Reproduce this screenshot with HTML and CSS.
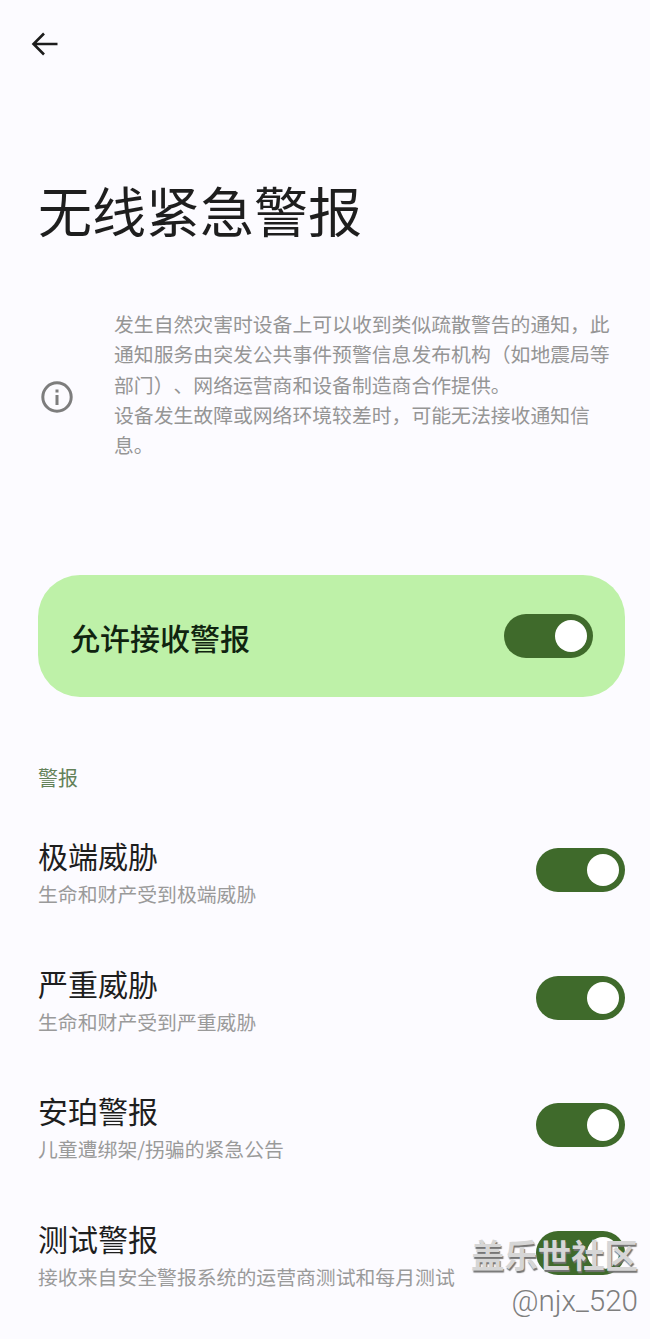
FILE: index.html
```html
<!DOCTYPE html>
<html lang="zh-CN">
<head>
<meta charset="utf-8">
<title>无线紧急警报</title>
<link rel="stylesheet" href="styles.css">
</head>
<body>
<main class="page">
  <header class="topbar">
    <svg class="back" viewBox="0 0 28 26" width="28" height="26" aria-hidden="true"><path d="M26.5 13H3M13 2.5 2.5 13 13 23.5" fill="none" stroke="#1c1c1c" stroke-width="2.6"/></svg>
  </header>
  <h1 class="title">无线紧急警报</h1>
  <section class="notice">
    <svg class="info" viewBox="0 0 32 32" width="32" height="32" aria-hidden="true"><circle cx="16" cy="16" r="14.2" fill="none" stroke="#7d7d7d" stroke-width="3"/><rect x="14.5" y="14" width="3" height="10" fill="#7d7d7d"/><rect x="14.5" y="8.5" width="3" height="3" fill="#7d7d7d"/></svg>
    <p class="notice-text">发生自然灾害时设备上可以收到类似疏散警告的通知，此通知服务由突发公共事件预警信息发布机构（如地震局等部门）、网络运营商和设备制造商合作提供。<br>设备发生故障或网络环境较差时，可能无法接收通知信息。</p>
  </section>
  <section class="master">
    <span class="master-label">允许接收警报</span>
    <span class="switch"><span class="knob"></span></span>
  </section>
  <h2 class="section-title">警报</h2>
  <ul class="list">
    <li class="row">
      <div class="row-text"><div class="row-title">极端威胁</div><div class="row-sub">生命和财产受到极端威胁</div></div>
      <span class="switch"><span class="knob"></span></span>
    </li>
    <li class="row">
      <div class="row-text"><div class="row-title">严重威胁</div><div class="row-sub">生命和财产受到严重威胁</div></div>
      <span class="switch"><span class="knob"></span></span>
    </li>
    <li class="row">
      <div class="row-text"><div class="row-title">安珀警报</div><div class="row-sub">儿童遭绑架/拐骗的紧急公告</div></div>
      <span class="switch"><span class="knob"></span></span>
    </li>
    <li class="row">
      <div class="row-text"><div class="row-title">测试警报</div><div class="row-sub">接收来自安全警报系统的运营商测试和每月测试</div></div>
      <span class="switch"><span class="knob"></span></span>
    </li>
  </ul>
  <div class="watermark">
    <div class="wm-brand">盖乐世社区</div>
    <div class="wm-user">@njx_520</div>
  </div>
</main>
</body>
</html>
```
FILE: styles.css
```css
* { box-sizing: border-box; }
html, body { margin: 0; padding: 0; height: 1339px; overflow: hidden; }
body {
  background: #fcfbff;
  font-family: "Noto Sans CJK SC", "Noto Sans", sans-serif;
  color: #1c1c1c;
  text-spacing-trim: space-all;
}
.page { position: relative; height: 1339px; padding: 0 25px 0 38px; overflow: hidden; }
.topbar { height: 32px; padding-top: 31px; margin-left: -7px; }
.back { display: block; }
.title {
  margin: 146px 0 0;
  font-size: 54px;
  line-height: 64px;
  font-weight: 400;
  color: #1e1e1e;
}
.notice {
  display: flex;
  align-items: center;
  margin-top: 67px;
  padding-left: 3px;
}
.info { flex: none; margin: 24px 41px 0 0; }
.notice-text {
  margin: 0;
  width: 500px;
  font-size: 19.84px;
  line-height: 30.3px;
  color: #959595;
}
.master {
  display: flex;
  align-items: center;
  justify-content: space-between;
  height: 122px;
  margin-top: 115px;
  padding: 0 32px;
  background: #bef1a8;
  border-radius: 42px;
}
.master-label { padding-top: 2px; font-size: 30px; font-weight: 500; color: #102410; line-height: 40px; }
.switch {
  flex: none;
  display: flex;
  align-items: center;
  justify-content: flex-end;
  width: 89px;
  height: 44px;
  padding-right: 6px;
  background: #3f6a2b;
  border-radius: 22px;
}
.knob { width: 32px; height: 32px; border-radius: 50%; background: #fff; }
.section-title {
  margin: 67px 0 0;
  font-size: 20px;
  line-height: 28px;
  font-weight: 400;
  color: #638158;
}
.list { list-style: none; margin: 36px 0 0; padding: 0; }
.row {
  display: flex;
  align-items: center;
  justify-content: space-between;
  height: 84px;
  margin-bottom: 43.5px;
}
.row-text { padding-top: 4px; }
.row-title { font-size: 30px; line-height: 40px; color: #1e1e1e; }
.row-sub { margin-top: 4px; font-size: 19.85px; line-height: 30px; color: #9a9a9a; }
.watermark {
  position: absolute;
  right: 12px;
  top: 1234px;
  text-align: right;
}
.wm-brand {
  font-size: 33.4px;
  line-height: 40px;
  font-weight: 700;
  color: #d6d6d6;
  text-shadow: 1px 2px 1px #757575;
}
.wm-user {
  font-family: "Roboto", sans-serif;
  font-size: 29.6px;
  font-weight: 300;
  line-height: 40px;
  color: #7e7e7e;
  margin-top: 7px;
}
```
